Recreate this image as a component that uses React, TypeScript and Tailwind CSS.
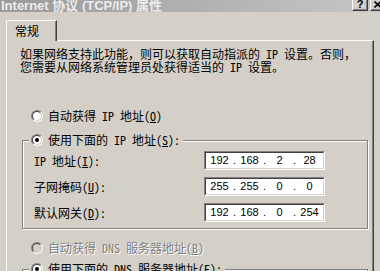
import React from 'react';

const ipRows = [
  { label: 'IP 地址', key: 'I', parts: ['192', '168', '2', '28'] },
  { label: '子网掩码', key: 'U', parts: ['255', '255', '0', '0'] },
  { label: '默认网关', key: 'D', parts: ['192', '168', '0', '254'] },
];

// full-width punctuation, kept out of the half-width feature
function Fw({ children }: { children: React.ReactNode }) {
  return <span className="[font-feature-settings:normal]">{children}</span>;
}

function Radio({ checked = false, disabled = false }: { checked?: boolean; disabled?: boolean }) {
  return (
    <span className="flex h-[12px] w-[12px] shrink-0 rounded-full border border-t-[#808080] border-l-[#808080] border-b-white border-r-white">
      <span
        className={`flex flex-1 items-center justify-center rounded-full border border-t-[#404040] border-l-[#404040] border-b-[#d4d0c8] border-r-[#d4d0c8] ${
          disabled ? 'bg-[#d4d0c8]' : 'bg-white'
        }`}
      >
        {checked && <span className="h-[4px] w-[4px] rounded-full bg-black" />}
      </span>
    </span>
  );
}

function IpField({ parts }: { parts: string[] }) {
  return (
    <div className="h-[19px] w-[121px] border border-t-[#808080] border-l-[#808080] border-b-white border-r-white">
      <div className="flex h-full items-center border border-t-[#404040] border-l-[#404040] border-b-[#d4d0c8] border-r-[#d4d0c8] bg-white pl-[1px] font-['Liberation_Sans',sans-serif] text-[11px] leading-[13px] text-black [font-feature-settings:normal]">
        {parts.map((p, i) => (
          <React.Fragment key={i}>
            {i > 0 && <span className="w-[5px] text-center">.</span>}
            <span className="w-[25px] text-center">{p}</span>
          </React.Fragment>
        ))}
      </div>
    </div>
  );
}

function TitleButton({ children }: { children: React.ReactNode }) {
  return (
    <div className="h-[14px] w-[16px] border border-t-white border-l-white border-b-[#404040] border-r-[#404040] bg-[#d4d0c8] shadow-[inset_-1px_-1px_0_#808080]">
      <div className="flex h-full items-center justify-center">{children}</div>
    </div>
  );
}

export default function App() {
  return (
    <div className="flex h-[271px] w-[380px] flex-col overflow-hidden bg-[#d4d0c8] font-['Noto_Sans_CJK_SC',sans-serif] text-[12px] text-black [font-feature-settings:'hwid']">
      {/* title bar, top cut off */}
      <div className="flex h-[12px] shrink-0 items-start justify-between overflow-hidden bg-linear-to-r from-[#9a9a9a] to-[#c6c6c6]">
        <span className="-mt-[1px] whitespace-nowrap pl-[1px] font-['Liberation_Sans','Noto_Sans_CJK_SC',sans-serif] text-[13px] font-bold leading-[13px] text-[#ececec] [font-feature-settings:normal]">
          Internet 协议 (TCP/IP) 属性
        </span>
        <div className="-mr-[6px] -mt-[3px] flex gap-[2px]">
          <TitleButton>
            <span className="font-['Liberation_Sans',sans-serif] text-[11px] font-bold leading-[11px]">?</span>
          </TitleButton>
          <TitleButton>
            <svg width="8" height="7" viewBox="0 0 8 7">
              <path d="M0.5 0.5 L7 6.5 M7 0.5 L0.5 6.5" stroke="#000" strokeWidth="1.6" />
            </svg>
          </TitleButton>
        </div>
      </div>

      <div className="flex flex-1 flex-col px-[6px] pt-[8px]">
        {/* tab */}
        <div className="flex h-[20px] shrink-0">
          <div className="relative z-10 -mb-[1px] flex h-[21px] w-[51px] items-center rounded-tl-[2px] border-l border-t border-r border-l-white border-t-white border-r-[#404040] bg-[#d4d0c8] pl-[8px] leading-[14px] shadow-[inset_-1px_0_0_#808080]">
            常规
          </div>
        </div>

        {/* tab page */}
        <div className="flex flex-1 flex-col border-l border-t border-r border-l-white border-t-white border-r-[#404040] pl-[13px] pt-[6px] shadow-[inset_-1px_0_0_#808080]">
          <div className="whitespace-nowrap leading-[13px]">
            <div>
              如果网络支持此功能<Fw>，</Fw>则可以获取自动指派的 IP 设置<Fw>。</Fw>否则<Fw>，</Fw>
            </div>
            <div>
              您需要从网络系统管理员处获得适当的 IP 设置<Fw>。</Fw>
            </div>
          </div>

          <div className="ml-[11px] mt-[36px] flex h-[14px] items-center gap-[5px] leading-[14px]">
            <Radio />
            <span>
              自动获得 IP 地址(<u>O</u>)
            </span>
          </div>

          <fieldset className="ml-[2px] mt-[10px] w-[346px] border border-[#808080] px-[6px] pb-[6px] pt-[4px] shadow-[inset_1px_1px_0_#fff,1px_1px_0_#fff]">
            <legend className="flex h-[14px] items-center gap-[5px] bg-[#d4d0c8] pl-[2px] pr-[3px] leading-[14px]">
              <Radio checked />
              <span>
                使用下面的 IP 地址(<u>S</u>):
              </span>
            </legend>
            <div className="flex flex-col gap-[7px]">
              {ipRows.map((row) => (
                <div key={row.key} className="flex h-[19px] items-center">
                  <span className="w-[175px] pl-[5px] leading-[14px]">
                    {row.label}(<u>{row.key}</u>):
                  </span>
                  <IpField parts={row.parts} />
                </div>
              ))}
            </div>
          </fieldset>

          <div className="ml-[11px] mt-[12px] flex h-[14px] items-center gap-[5px] leading-[14px] text-[#808080]">
            <Radio disabled />
            <span className="[text-shadow:1px_1px_0_#fff]">
              自动获得 DNS 服务器地址(<u>B</u>)
            </span>
          </div>

          <fieldset className="ml-[2px] mt-[7px] h-[60px] w-[346px] shrink-0 border border-[#808080] px-[6px] shadow-[inset_1px_1px_0_#fff,1px_1px_0_#fff]">
            <legend className="flex h-[14px] items-center gap-[5px] bg-[#d4d0c8] pl-[2px] pr-[3px] leading-[14px]">
              <Radio checked />
              <span>
                使用下面的 DNS 服务器地址(<u>E</u>):
              </span>
            </legend>
          </fieldset>
        </div>
      </div>
    </div>
  );
}
